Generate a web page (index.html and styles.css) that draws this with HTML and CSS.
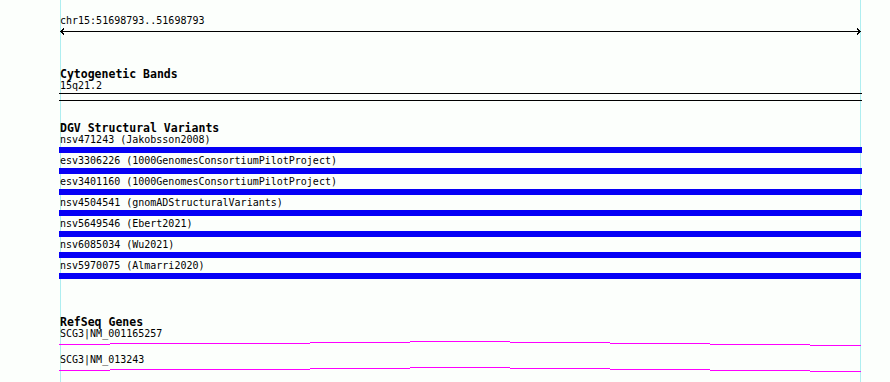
FILE: index.html
```html
<!DOCTYPE html>
<html>

<head>
    <link rel="stylesheet" href="styles.css">
</head>

<body>

    <div class="view">
        <div class="ruler">
            <div class="locus">chr15:51698793..51698793</div>
            <svg class="span-arrow" width="801" height="7" viewBox="0 0 801 7">
                <line x1="0" y1="3.5" x2="801" y2="3.5" />
                <polyline points="4,0.5 1,3.5 4,6.5" />
                <polyline points="797,0.5 800,3.5 797,6.5" />
            </svg>
        </div>

        <section class="track cyto">
            <h3 class="track-title">Cytogenetic Bands</h3>
            <div class="label">15q21.2</div>
            <div class="band"></div>
        </section>

        <section class="track dgv">
            <h3 class="track-title">DGV Structural Variants</h3>
            <div class="features">
                <div class="feature">
                    <div class="label">nsv471243 (Jakobsson2008)</div>
                    <div class="bar" style="width: 803px"></div>
                </div>
                <div class="feature">
                    <div class="label">esv3306226 (1000GenomesConsortiumPilotProject)</div>
                    <div class="bar" style="width: 803px"></div>
                </div>
                <div class="feature">
                    <div class="label">esv3401160 (1000GenomesConsortiumPilotProject)</div>
                    <div class="bar" style="width: 803px"></div>
                </div>
                <div class="feature">
                    <div class="label">nsv4504541 (gnomADStructuralVariants)</div>
                    <div class="bar" style="width: 803px"></div>
                </div>
                <div class="feature">
                    <div class="label">nsv5649546 (Ebert2021)</div>
                    <div class="bar" style="width: 802px"></div>
                </div>
                <div class="feature">
                    <div class="label">nsv6085034 (Wu2021)</div>
                    <div class="bar" style="width: 802px"></div>
                </div>
                <div class="feature">
                    <div class="label">nsv5970075 (Almarri2020)</div>
                    <div class="bar" style="width: 802px"></div>
                </div>
            </div>
        </section>

        <section class="track refseq">
            <h3 class="track-title">RefSeq Genes</h3>
            <div class="gene">
                <div class="label">SCG3|NM_001165257</div>
                <svg class="gene-line" width="803" height="14" viewBox="0 0 803 14">
                    <path d="M0 4.5H51M51 3.5H251M251 2.5H351M351 1.5H451M451 2.5H551M551 3.5H651M651 4.5H751M751 5.5H802" />
                </svg>
            </div>
            <div class="gene">
                <div class="label">SCG3|NM_013243</div>
                <svg class="gene-line" width="803" height="14" viewBox="0 0 803 14">
                    <path d="M0 4.5H51M51 3.5H251M251 2.5H351M351 1.5H451M451 2.5H551M551 3.5H651M651 4.5H751M751 5.5H802" />
                </svg>
            </div>
        </section>
    </div>

</body>

</html>
```

FILE: styles.css
```css
body {
    margin: 0;
    height: 382px;
    overflow: hidden;
    font-family: "DejaVu Sans Mono", monospace;
    font-size: 10px;
    color: #000;
    /* guide lines at both ends of the view */
    background:
        linear-gradient(#aeeef0, #aeeef0) 60px 0 / 1px 100% no-repeat,
        linear-gradient(#aeeef0, #aeeef0) 860px 0 / 1px 100% no-repeat,
        #fcfffc;
}

.view {
    width: 800px;
    margin-left: 60px;
    padding-top: 15px;
}

.locus,
.label {
    line-height: 12px;
    white-space: nowrap;
}

.span-arrow {
    display: block;
    margin-top: 1px;
    fill: none;
    stroke: #000;
    stroke-width: 1;
    shape-rendering: crispEdges;
}

.track-title {
    margin: 0;
    font-size: 11.5px;
    font-weight: bold;
    line-height: 12px;
}

.cyto {
    margin-top: 33px;
}

.band {
    box-sizing: border-box;
    width: 803px;
    height: 8px;
    margin: 1px 0 0 -1px;
    border-top: 1px solid #000;
    border-bottom: 1px solid #000;
}

.dgv {
    margin-top: 21px;
}

.features {
    display: flex;
    flex-direction: column;
    gap: 2px;
}

.bar {
    height: 6px;
    margin: 1px 0 0 -1px;
    background-color: #0600f6;
}

.refseq {
    margin-top: 37px;
}

.gene-line {
    display: block;
    margin-left: -1px;
    fill: none;
    stroke: #ff00ff;
    stroke-width: 1;
    shape-rendering: crispEdges;
}
```
